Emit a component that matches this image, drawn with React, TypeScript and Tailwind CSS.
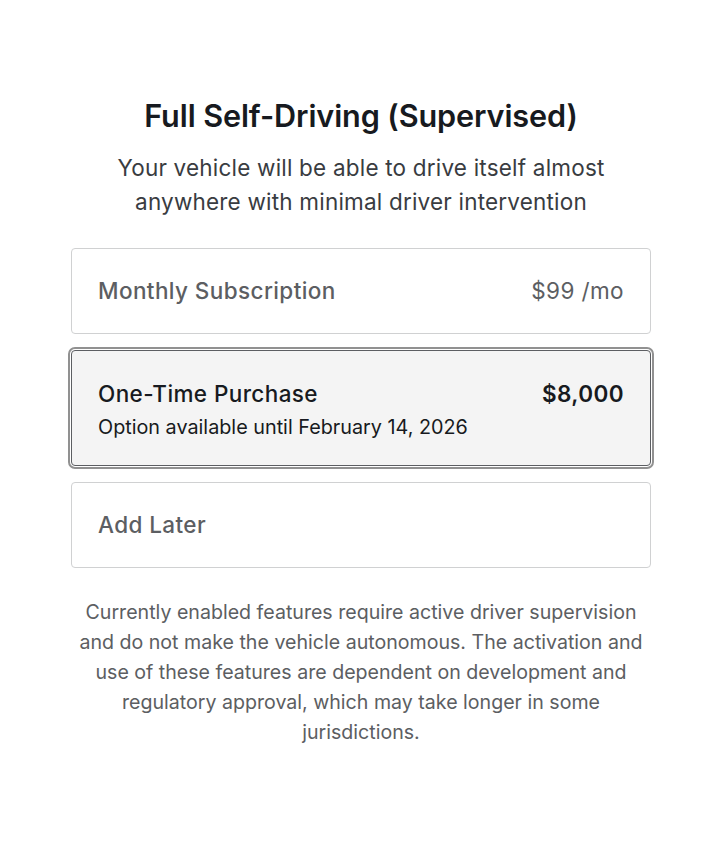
import React from 'react';

const App: React.FC = () => {
  return (
    <div className="min-h-screen bg-white text-[#171a20] font-['Inter','Liberation_Sans',sans-serif]">
      <main className="mx-auto w-[580px] pt-[96px]">
        {/* Header */}
        <h1 className="text-center text-[30.6px] leading-[40px] font-semibold tracking-[-0.1px] text-[#171a20]">
          Full Self-Driving (Supervised)
        </h1>
        <p className="mt-[15px] text-center text-[22.5px] leading-[34px] tracking-[0.2px] text-[#393c41]">
          Your vehicle will be able to drive itself almost
          <br />
          anywhere with minimal driver intervention
        </p>

        {/* Options */}
        <div className="mt-[29px] flex flex-col gap-[16px]">
          <div className="flex h-[86px] items-center justify-between rounded-[4px] border border-[#d0d1d2] px-[26px]">
            <span className="text-[22.5px] font-medium tracking-[0.4px] text-[#5c5e62]">Monthly Subscription</span>
            <span className="text-[22.5px] tracking-[0.4px] text-[#5c5e62]">$99 /mo</span>
          </div>

          <div className="rounded-[4px] border border-[#5c5e62] bg-[#f4f4f4] px-[26px] pt-[29px] pb-[24px] outline-2 outline-offset-[1px] outline-[#919191]">
            <div className="flex items-center justify-between leading-[28px]">
              <span className="text-[22.5px] font-medium tracking-[0.4px] text-[#171a20]">One-Time Purchase</span>
              <span className="text-[22.5px] font-semibold tracking-[0.4px] text-[#171a20]">$8,000</span>
            </div>
            <div className="mt-[5px] text-[19.8px] leading-[28px] text-[#171a20]">Option available until February 14, 2026</div>
          </div>

          <div className="flex h-[86px] items-center rounded-[4px] border border-[#d0d1d2] px-[26px]">
            <span className="text-[22.5px] font-medium tracking-[0.4px] text-[#5c5e62]">Add Later</span>
          </div>
        </div>

        {/* Disclaimer */}
        <p className="mx-auto mt-[29px] w-[566px] text-center text-[19.6px] leading-[30px] text-[#5c5e62]">
          Currently enabled features require active driver supervision and do not make the vehicle autonomous. The activation and use of these features are dependent on development and regulatory approval, which may take longer in some jurisdictions.
        </p>
      </main>
    </div>
  );
};

export default App;
